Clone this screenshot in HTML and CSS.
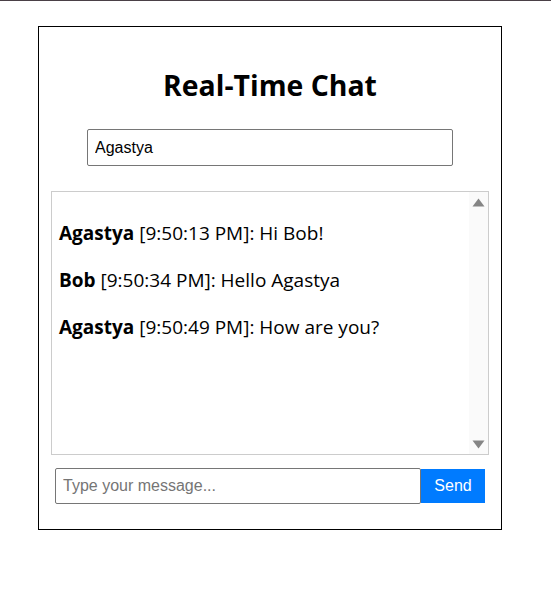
FILE: index.html
```html
<!DOCTYPE html>
<html lang="en">
<head>
<meta charset="utf-8">
<title>Real-Time Chat</title>
<link rel="stylesheet" href="styles.css">
</head>
<body>
<div class="chat">
  <h1 class="title">Real-Time Chat</h1>
  <input class="name-input" type="text" value="Agastya">
  <div class="chat-box">
    <div class="messages">
      <p class="msg"><strong>Agastya</strong> [9:50:13 PM]: Hi Bob!</p>
      <p class="msg"><strong>Bob</strong> [9:50:34 PM]: Hello Agastya</p>
      <p class="msg"><strong>Agastya</strong> [9:50:49 PM]: How are you?</p>
    </div>
    <div class="scrollbar">
      <svg class="arrow" width="13" height="9" viewBox="0 0 13 9"><polygon points="6.5,0.5 12.5,8.5 0.5,8.5" fill="#858585"/></svg>
      <svg class="arrow" width="13" height="9" viewBox="0 0 13 9"><polygon points="0.5,0.5 12.5,0.5 6.5,8.5" fill="#858585"/></svg>
    </div>
  </div>
  <form class="send-row">
    <input class="msg-input" type="text" placeholder="Type your message...">
    <button class="send-btn" type="button">Send</button>
  </form>
</div>
</body>
</html>
```
FILE: styles.css
```css
html {
  border-top: 1px solid #4a4046;
}
body {
  margin: 0;
  background: #fff;
  font-family: "Open Sans", "Noto Sans", sans-serif;
  color: #000;
}
.chat {
  box-sizing: border-box;
  width: 464px;
  height: 504px;
  margin: 25px 0 0 38px;
  border: 1px solid #000;
  padding: 0 12px;
  display: flex;
  flex-direction: column;
}
.title {
  margin: 38px 0 0;
  font-size: 28.4px;
  line-height: 40px;
  font-weight: 700;
  text-align: center;
}
.name-input {
  box-sizing: border-box;
  width: 366px;
  height: 37px;
  margin: 24px auto 0;
  border: 1px solid #767676;
  border-radius: 2px;
  padding: 0 7px;
  font-family: "Liberation Sans", Arial, sans-serif;
  font-size: 16px;
  color: #000;
  outline: none;
}
.chat-box {
  box-sizing: border-box;
  height: 264px;
  margin-top: 25px;
  border: 1px solid #ccc;
  display: flex;
}
.messages {
  flex: 1;
  padding: 28px 7px 0;
}
.msg {
  margin: 0 0 20px;
  font-size: 19px;
  line-height: 27px;
}
.msg strong {
  font-weight: 700;
}
.scrollbar {
  width: 19px;
  background: #fafafa;
  display: flex;
  flex-direction: column;
  justify-content: space-between;
  align-items: center;
  padding: 6px 0 5px;
}
.arrow {
  display: block;
}
.send-row {
  display: flex;
  margin: 13px 4px 0;
  height: 36px;
}
.msg-input {
  box-sizing: border-box;
  width: 366px;
  height: 36px;
  border: 1px solid #767676;
  border-radius: 2px;
  padding: 0 7px;
  font-family: "Liberation Sans", Arial, sans-serif;
  font-size: 16px;
  outline: none;
}
.msg-input::placeholder {
  color: #757575;
}
.send-btn {
  width: 64px;
  height: 34px;
  margin-top: 1px;
  border: none;
  background: #007bff;
  color: #fff;
  font-family: "Liberation Sans", Arial, sans-serif;
  font-size: 16px;
  padding: 0;
}
```
